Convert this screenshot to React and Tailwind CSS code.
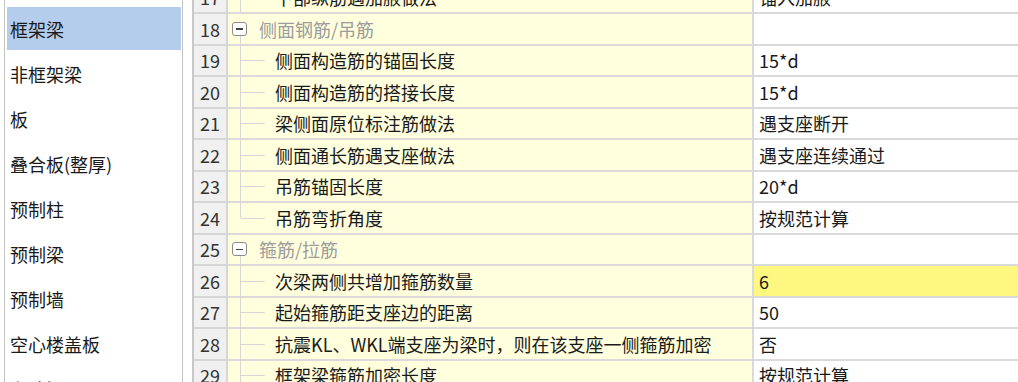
import React from "react";

const sideItems = ["框架梁", "非框架梁", "板", "叠合板(整厚)", "预制柱", "预制梁", "预制墙", "空心楼盖板", "主肋梁"];

const rows = [
  { n: 17, t: "下部纵筋遇加腋做法", v: "锚入加腋", kind: "child" },
  { n: 18, t: "侧面钢筋/吊筋", kind: "group" },
  { n: 19, t: "侧面构造筋的锚固长度", v: "15*d", kind: "child" },
  { n: 20, t: "侧面构造筋的搭接长度", v: "15*d", kind: "child" },
  { n: 21, t: "梁侧面原位标注筋做法", v: "遇支座断开", kind: "child" },
  { n: 22, t: "侧面通长筋遇支座做法", v: "遇支座连续通过", kind: "child" },
  { n: 23, t: "吊筋锚固长度", v: "20*d", kind: "child" },
  { n: 24, t: "吊筋弯折角度", v: "按规范计算", kind: "last" },
  { n: 25, t: "箍筋/拉筋", kind: "group" },
  { n: 26, t: "次梁两侧共增加箍筋数量", v: "6", kind: "child", hl: true },
  { n: 27, t: "起始箍筋距支座边的距离", v: "50", kind: "child" },
  { n: 28, t: "抗震KL、WKL端支座为梁时，则在该支座一侧箍筋加密", v: "否", kind: "child" },
  { n: 29, t: "框架梁箍筋加密长度", v: "按规范计算", kind: "child" },
];

function TreeCell({ r }) {
  if (r.kind === "group") {
    return (
      <div className="relative w-[524px] h-full bg-[#ffffde] border-b-2 border-[#dadada] flex items-center">
        <div className="absolute left-[4px] top-1/2 -translate-y-1/2 w-[15px] h-[14px] border border-[#8c8c8c] rounded-[3px] bg-white flex items-center justify-center">
          <div className="w-[7px] h-[1.5px] bg-[#444]" />
        </div>
        <div className="absolute left-[11.5px] top-[calc(50%+7px)] bottom-[-2px] w-px bg-[#d6d6d6]" />
        <span className="pl-[31px] text-[#9c9c9c]">{r.t}</span>
      </div>
    );
  }
  return (
    <div className="relative w-[524px] h-full bg-[#ffffde] border-b-2 border-[#dadada] flex items-center">
      <div
        className={
          r.kind === "last"
            ? "absolute left-[11.5px] top-0 h-1/2 w-px bg-[#d6d6d6]"
            : "absolute left-[11.5px] top-0 bottom-[-2px] w-px bg-[#d6d6d6]"
        }
      />
      <div className="absolute left-[13px] top-1/2 w-[24px] h-px bg-[#d6d6d6]" />
      <span className="pl-[47px] text-[#1a1a1a] whitespace-nowrap">{r.t}</span>
    </div>
  );
}

export default function App() {
  return (
    <div
      className="w-[1018px] h-[382px] overflow-hidden bg-white flex text-[18px] leading-none"
      style={{ fontFamily: '"Noto Sans CJK SC", "Noto Sans", sans-serif' }}
    >
      {/* Sidebar */}
      <div className="ml-[4px] w-[179px] h-full border-l border-r border-[#c4c4c4] flex flex-col overflow-hidden">
        <div className="mt-[6px] flex flex-col">
          {sideItems.map((s, i) => (
            <div key={s} className="h-[45px] shrink-0 flex py-px">
              <div
                className={
                  i === 0
                    ? "ml-[2px] mr-px flex-1 flex items-center pl-[3px] bg-[#b4cdec] text-[#1a1a1a]"
                    : "ml-[2px] mr-px flex-1 flex items-center pl-[3px] text-[#1a1a1a]"
                }
              >
                {s}
              </div>
            </div>
          ))}
        </div>
      </div>

      {/* Table */}
      <div className="ml-[9px] flex-1 h-full border-l-2 border-[#c8c8c8] overflow-hidden">
        <div className="mt-[-17.5px] flex flex-col">
          {rows.map((r) => (
            <div key={r.n} className="h-[31.5px] shrink-0 flex">
              <div className="w-[34px] h-full bg-[#f0f0f0] border-r-2 border-b-2 border-[#d6d6d6] flex items-center justify-center text-[#333]">
                {r.n}
              </div>
              <TreeCell r={r} />
              <div
                className={
                  r.hl
                    ? "flex-1 h-full border-l-2 border-b-2 border-[#dadada] bg-[#fff880] flex items-center pl-[5px] text-[#1a1a1a] whitespace-nowrap"
                    : "flex-1 h-full border-l-2 border-b-2 border-[#dadada] bg-white flex items-center pl-[5px] text-[#1a1a1a] whitespace-nowrap"
                }
              >
                {r.v || ""}
              </div>
            </div>
          ))}
        </div>
      </div>
    </div>
  );
}
